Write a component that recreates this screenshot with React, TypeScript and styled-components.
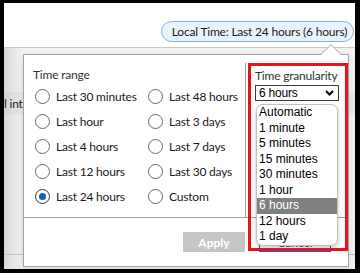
import React from "react";
import styled, { createGlobalStyle } from "styled-components";

const UI = `"Lato", "Segoe UI", "Liberation Sans", sans-serif`;
const ARIAL = `"Liberation Sans", Arial, sans-serif`;

const Global = createGlobalStyle`
  html, body { margin: 0; padding: 0; background: #fff; }
  * { box-sizing: border-box; }
`;

const Frame = styled.div`
  width: 360px;
  height: 273px;
  border-style: solid;
  border-color: #000;
  border-width: 3px 5px 4px 4px;
  position: relative;
  overflow: hidden;
  display: flex;
  flex-direction: column;
  background: #f4f4f4;
  font-family: ${UI};
  letter-spacing: -0.2px;
  color: #1b1b1b;
`;

const TopBar = styled.header`
  height: 45px;
  flex: none;
  background: #fff;
  border-bottom: 1px solid #c9c9c9;
  display: flex;
  justify-content: flex-end;
  align-items: flex-start;
  padding: 18px 1px 0 0;
`;

const Pill = styled.button`
  height: 21px;
  width: 193px;
  border: 1px solid #7fb3e6;
  border-radius: 11px;
  background: #eaf3fc;
  font: 12px ${UI};
  letter-spacing: -0.2px;
  color: #1b1b1b;
  padding: 0 0 0 4px;
  display: flex;
  align-items: center;
  justify-content: center;
`;

const Content = styled.div`
  flex: 1;
  background: linear-gradient(to right, #d9d9d9 0, #f3f3f3 19px, #f3f3f3 100%);
  padding-top: 44px;
`;

const ListRow = styled.div`
  height: 23px;
  display: flex;
  align-items: center;
  background: linear-gradient(to right, #d2d2d2 0, #e9e9e9 19px);
  font-size: 12px;
  white-space: nowrap;
  overflow: hidden;
`;

const ListDivider = styled.div`
  margin-top: 139px;
  border-top: 1px solid #c4c4c4;
`;

const Popover = styled.div`
  position: absolute;
  left: 19px;
  top: 51px;
  width: 326px;
  height: 213px;
  background: #fff;
  border: 1px solid #a3a3a3;
  box-shadow: 0 2px 6px rgba(0, 0, 0, 0.12);
  display: flex;
  flex-direction: column;

  &::before,
  &::after {
    content: "";
    position: absolute;
    left: 297px;
    width: 0;
    height: 0;
    border-left: 10px solid transparent;
    border-right: 10px solid transparent;
  }
  &::before {
    top: -11px;
    border-bottom: 10px solid #a3a3a3;
  }
  &::after {
    top: -10px;
    border-bottom: 10px solid #fff;
  }
`;

const PopBody = styled.div`
  height: 162px;
  display: flex;
`;

const RangeSection = styled.section`
  width: 221px;
  padding: 12px 0 0 9px;
`;

const GranSection = styled.section`
  flex: 1;
  border-left: 1px solid #a3a3a3;
  margin-top: 8px;
  padding: 5px 0 0 9px;
`;

const SectionLabel = styled.div`
  font-size: 12px;
  line-height: 16px;
  color: #333;
`;

const RadioGrid = styled.div`
  display: grid;
  grid-template-columns: 113px auto;
  grid-auto-rows: 25px;
  margin-top: 1px;
  padding-left: 2px;
`;

const RadioItem = styled.label`
  display: flex;
  align-items: center;
  gap: 6px;
  font-size: 12px;
  color: #1b1b1b;
  white-space: nowrap;
`;

const Circle = styled.span<{ $checked?: boolean }>`
  width: 15px;
  height: 15px;
  flex: none;
  border-radius: 50%;
  border: 1px solid ${(p) => (p.$checked ? "#333" : "#6a6a6a")};
  background: #fff;
  display: flex;
  align-items: center;
  justify-content: center;

  &::after {
    content: "";
    width: 7px;
    height: 7px;
    border-radius: 50%;
    background: ${(p) => (p.$checked ? "#0f62c9" : "transparent")};
  }
`;

const Select = styled.div`
  margin-top: 1px;
  width: 84px;
  height: 16px;
  border: 1px solid #3c3c3c;
  font: 12px ${ARIAL};
  color: #000;
  display: flex;
  align-items: center;
  justify-content: space-between;
  padding: 0 4px 0 3px;
`;

const Footer = styled.footer`
  flex: 1;
  border-top: 1px solid #a3a3a3;
  display: flex;
  justify-content: flex-end;
  align-items: flex-start;
  gap: 14px;
  padding: 14px 17px 0 0;
`;

const ApplyButton = styled.button`
  width: 62px;
  height: 20px;
  border: none;
  background: #c6c6c6;
  color: #fff;
  font: 700 12px ${UI};
  padding: 0;
`;

const CancelButton = styled.button`
  width: 72px;
  height: 20px;
  border: 1px solid #0f6cbd;
  background: #fff;
  color: #0f6cbd;
  font: 12px ${UI};
  padding: 0;
`;

const Listbox = styled.ul`
  position: absolute;
  left: 252px;
  top: 101px;
  width: 82px;
  margin: 0;
  padding: 0;
  list-style: none;
  background: #fff;
  border: 1px solid #c2c2c2;
  border-radius: 7px;
  overflow: hidden;
  box-shadow: 0 2px 4px rgba(0, 0, 0, 0.22);
`;

const Option = styled.li<{ $selected?: boolean }>`
  height: 15.5px;
  padding-left: 2px;
  font: 12px ${ARIAL};
  line-height: 15.5px;
  letter-spacing: 0;
  color: ${(p) => (p.$selected ? "#fff" : "#000")};
  background: ${(p) => (p.$selected ? "#808080" : "transparent")};
`;

const Annotation = styled.div`
  position: absolute;
  left: 244px;
  top: 60px;
  width: 100px;
  height: 188px;
  border: 3px solid #e5131d;
  pointer-events: none;
`;

const ranges: [string, boolean][] = [
  ["Last 30 minutes", false],
  ["Last 48 hours", false],
  ["Last hour", false],
  ["Last 3 days", false],
  ["Last 4 hours", false],
  ["Last 7 days", false],
  ["Last 12 hours", false],
  ["Last 30 days", false],
  ["Last 24 hours", true],
  ["Custom", false],
];

const grains = [
  "Automatic",
  "1 minute",
  "5 minutes",
  "15 minutes",
  "30 minutes",
  "1 hour",
  "6 hours",
  "12 hours",
  "1 day",
];

const Chevron = () => (
  <svg width="9" height="6" viewBox="0 0 9 6">
    <polyline points="1,1 4.5,4.5 8,1" fill="none" stroke="#000" strokeWidth="2" />
  </svg>
);

export default function App() {
  return (
    <>
      <Global />
      <Frame>
        <TopBar>
          <Pill>Local Time: Last 24 hours (6 hours)</Pill>
        </TopBar>
        <Content>
          <ListRow>l interval</ListRow>
          <ListDivider />
        </Content>
        <Popover>
          <PopBody>
            <RangeSection>
              <SectionLabel>Time range</SectionLabel>
              <RadioGrid>
                {ranges.map(([label, checked]) => (
                  <RadioItem key={label}>
                    <Circle $checked={checked} />
                    {label}
                  </RadioItem>
                ))}
              </RadioGrid>
            </RangeSection>
            <GranSection>
              <SectionLabel>Time granularity</SectionLabel>
              <Select>
                6 hours
                <Chevron />
              </Select>
            </GranSection>
          </PopBody>
          <Footer>
            <ApplyButton>Apply</ApplyButton>
            <CancelButton>Cancel</CancelButton>
          </Footer>
        </Popover>
        <Listbox>
          {grains.map((g) => (
            <Option key={g} $selected={g === "6 hours"}>
              {g}
            </Option>
          ))}
        </Listbox>
        <Annotation />
      </Frame>
    </>
  );
}
